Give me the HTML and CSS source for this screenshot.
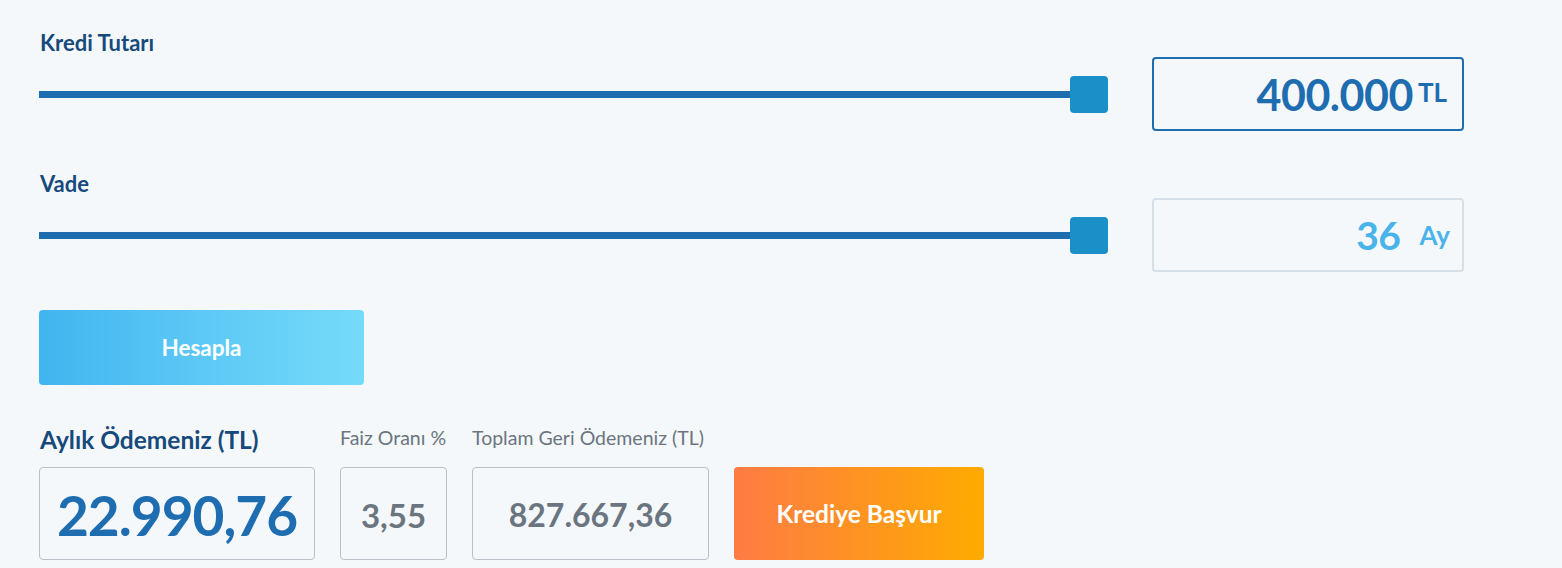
FILE: index.html
```html
<!DOCTYPE html>
<html lang="tr">
<head>
<meta charset="utf-8">
<title>Kredi Hesaplama</title>
<link rel="stylesheet" href="styles.css">
</head>
<body>
<main class="calc">
  <section class="field">
    <div class="field-label">Kredi Tutarı</div>
    <div class="field-row">
      <div class="slider">
        <div class="slider-track"></div>
        <div class="slider-thumb"></div>
      </div>
      <div class="value-box value-box--active">
        <span class="value-num">400.000</span>
        <span class="value-unit">TL</span>
      </div>
    </div>
  </section>

  <section class="field field--second">
    <div class="field-label">Vade</div>
    <div class="field-row">
      <div class="slider">
        <div class="slider-track"></div>
        <div class="slider-thumb"></div>
      </div>
      <div class="value-box value-box--muted">
        <span class="value-num value-num--light">36</span>
        <span class="value-unit value-unit--light">Ay</span>
      </div>
    </div>
  </section>

  <button class="btn-calc" type="button">Hesapla</button>

  <section class="results">
    <div class="result result--main">
      <div class="result-label result-label--main">Aylık Ödemeniz (TL)</div>
      <div class="result-box result-box--main">22.990,76</div>
    </div>
    <div class="result result--rate">
      <div class="result-label">Faiz Oranı %</div>
      <div class="result-box result-box--rate">3,55</div>
    </div>
    <div class="result result--total">
      <div class="result-label">Toplam Geri Ödemeniz (TL)</div>
      <div class="result-box">827.667,36</div>
    </div>
    <button class="btn-apply" type="button">Krediye Başvur</button>
  </section>
</main>
</body>
</html>
```

FILE: styles.css
```css
* {
  box-sizing: border-box;
}

html, body {
  margin: 0;
  background: #f5f8fb;
}

body {
  font-family: "Source Sans Pro", Lato, "Noto Sans", sans-serif;
  overflow: hidden;
}

.calc {
  padding: 30px 0 0 39px;
  width: 1464px;
}

.field-label {
  font-size: 22px;
  line-height: 26px;
  font-weight: 700;
  color: #174a7c;
  padding-left: 1px;
  height: 27px;
}

.field--second {
  margin-top: 40px;
}

.field-row {
  display: flex;
  align-items: center;
  gap: 44px;
}

.slider {
  flex: 1;
  display: flex;
  align-items: center;
}

.slider-track {
  flex: 1;
  height: 7px;
  background: #1e6db0;
}

.slider-thumb {
  width: 38px;
  height: 37px;
  border-radius: 4px;
  background: #1a8fc8;
}

.value-box {
  width: 312px;
  height: 74px;
  border-radius: 4px;
  display: flex;
  align-items: center;
  justify-content: flex-end;
  padding-right: 15px;
}

.value-box--active {
  border: 2px solid #1e6db0;
}

.value-box--muted {
  border: 2px solid #d8e0e7;
  padding-right: 12px;
}

.value-num {
  font-size: 43px;
  font-weight: 700;
  color: #1e6db0;
  letter-spacing: -0.5px;
}

.value-unit {
  font-size: 26px;
  font-weight: 700;
  color: #1e6db0;
  margin-left: 5px;
  margin-top: -4px;
}

.value-num--light {
  font-size: 39px;
  color: #4ab4ea;
}

.value-unit--light {
  color: #4ab4ea;
  margin-left: 19px;
  margin-top: 0;
}

.btn-calc {
  display: block;
  margin-top: 38px;
  width: 325px;
  height: 75px;
  border: 0;
  border-radius: 4px;
  background: linear-gradient(90deg, #41b5f0, #76dbfa);
  color: #fff;
  font-family: inherit;
  font-size: 22.5px;
  font-weight: 700;
}

.results {
  display: flex;
  align-items: flex-end;
  gap: 25px;
  margin-top: 41px;
}

.result {
  flex: none;
}

.result--main {
  width: 276px;
}

.result--rate {
  width: 107px;
}

.result--total {
  width: 237px;
}

.result-label {
  font-size: 19.5px;
  line-height: 24px;
  color: #6b7580;
  margin-bottom: 17px;
  white-space: nowrap;
}

.result-label--main {
  font-size: 24.5px;
  line-height: 28px;
  font-weight: 700;
  color: #174a7c;
  margin-bottom: 13px;
  padding-left: 1px;
}

.result-box {
  height: 93px;
  border: 1px solid #b9c0c7;
  border-radius: 4px;
  display: flex;
  align-items: center;
  justify-content: center;
  font-weight: 700;
  color: #6b7580;
  font-size: 32px;
  padding-top: 2px;
}

.result-box--main {
  font-size: 55px;
  color: #1e6db0;
  letter-spacing: -1px;
}

.result-box--rate {
  font-size: 33px;
}

.btn-apply {
  flex: none;
  width: 250px;
  height: 93px;
  border: 0;
  border-radius: 4px;
  background: linear-gradient(90deg, #fe7b44, #feab00);
  color: #fff;
  font-family: inherit;
  font-size: 24.5px;
  font-weight: 700;
}
```
